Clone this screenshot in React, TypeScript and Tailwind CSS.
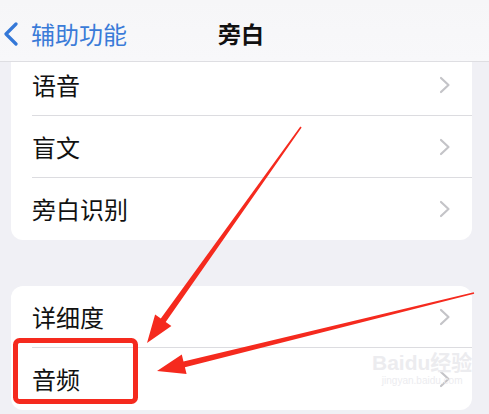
// @ts-nocheck
import React from 'react';

const font = { fontFamily: '"Noto Sans CJK SC", "Noto Sans", sans-serif' };

// tapered arrow polygon from start to tip
function arrowPoints(sx, sy, tx, ty, w0, w1, headLen, headHalf) {
  const dx = tx - sx;
  const dy = ty - sy;
  const len = Math.hypot(dx, dy);
  const ux = dx / len;
  const uy = dy / len;
  const nx = -uy;
  const ny = ux;
  const bx = tx - ux * headLen;
  const by = ty - uy * headLen;
  const pts = [
    [sx + nx * w0, sy + ny * w0],
    [bx + nx * w1, by + ny * w1],
    [bx + nx * headHalf, by + ny * headHalf],
    [tx, ty],
    [bx - nx * headHalf, by - ny * headHalf],
    [bx - nx * w1, by - ny * w1],
    [sx - nx * w0, sy - ny * w0],
  ];
  return pts.map(p => p.join(',')).join(' ');
}

const Chevron = () => (
  <svg width="12" height="18" viewBox="0 0 12 18" className="shrink-0">
    <path d="M2 2 L9.5 9 L2 16" fill="none" stroke="#c4c4c8" strokeWidth="2.2" strokeLinecap="round" strokeLinejoin="round" />
  </svg>
);

const Row = ({ label, last }) => (
  <div className="flex h-[62px] items-center pl-[21px]">
    <div className={`flex h-full flex-1 items-center pr-[21px] ${last ? '' : 'border-b border-[#dcdce0]'}`}>
      <span className="flex-1 text-[24px] leading-none text-[#111]">{label}</span>
      <Chevron />
    </div>
  </div>
);

export default function App() {
  return (
    <main className="relative h-[414px] w-[489px] overflow-hidden bg-[#f0f0f5]" style={font}>
      {/* nav */}
      <div className="relative z-10 flex h-[62px] items-center border-b border-[#dedee2] bg-gradient-to-b from-[#f6f6f8] to-[#f8f8fa]">
        <div className="flex w-[200px] items-center pl-[3px] pt-[6px]">
          <svg width="16" height="24" viewBox="0 0 16 24">
            <path d="M13 2 L3 12 L13 22" fill="none" stroke="#3478d8" strokeWidth="3.2" strokeLinecap="round" strokeLinejoin="round" />
          </svg>
          <span className="ml-[12px] text-[24px] leading-none text-[#3a7bd8]">辅助功能</span>
        </div>
        <span className="ml-[18px] pt-[6px] text-[23px] font-bold leading-none text-[#111]">旁白</span>
      </div>

      <div className="-mt-[8px] flex flex-col gap-[46px] pl-[11px] pr-[17px]">
        <div className="overflow-hidden rounded-b-[12px] bg-white">
          <Row label="语音" />
          <Row label="盲文" />
          <Row label="旁白识别" last />
        </div>
        <div className="overflow-hidden rounded-[12px] bg-white">
          <Row label="详细度" />
          <Row label="音频" last />
        </div>
      </div>

      {/* watermark */}
      <div className="absolute left-[372px] top-[352px] flex flex-col items-center text-[#ececef]">
        <span className="text-[21px] font-bold leading-none" style={{ fontFamily: '"Liberation Sans", "Noto Sans CJK SC", sans-serif' }}>Baidu经验</span>
        <span className="mt-[3px] text-[10px] leading-none" style={{ fontFamily: '"Liberation Sans", sans-serif' }}>jingyan.baidu.com</span>
      </div>

      {/* annotations */}
      <svg className="pointer-events-none absolute left-0 top-0" width="489" height="414">
        <rect x="15.5" y="340.5" width="120" height="61" rx="4" fill="none" stroke="#f52a1e" strokeWidth="5" />
        <polygon points={arrowPoints(301, 127, 147, 343, 0.8, 3, 28, 10)} fill="#f52a1e" />
        <polygon points={arrowPoints(474, 293, 157, 371, 0.8, 3, 28, 10)} fill="#f52a1e" />
      </svg>
    </main>
  );
}
